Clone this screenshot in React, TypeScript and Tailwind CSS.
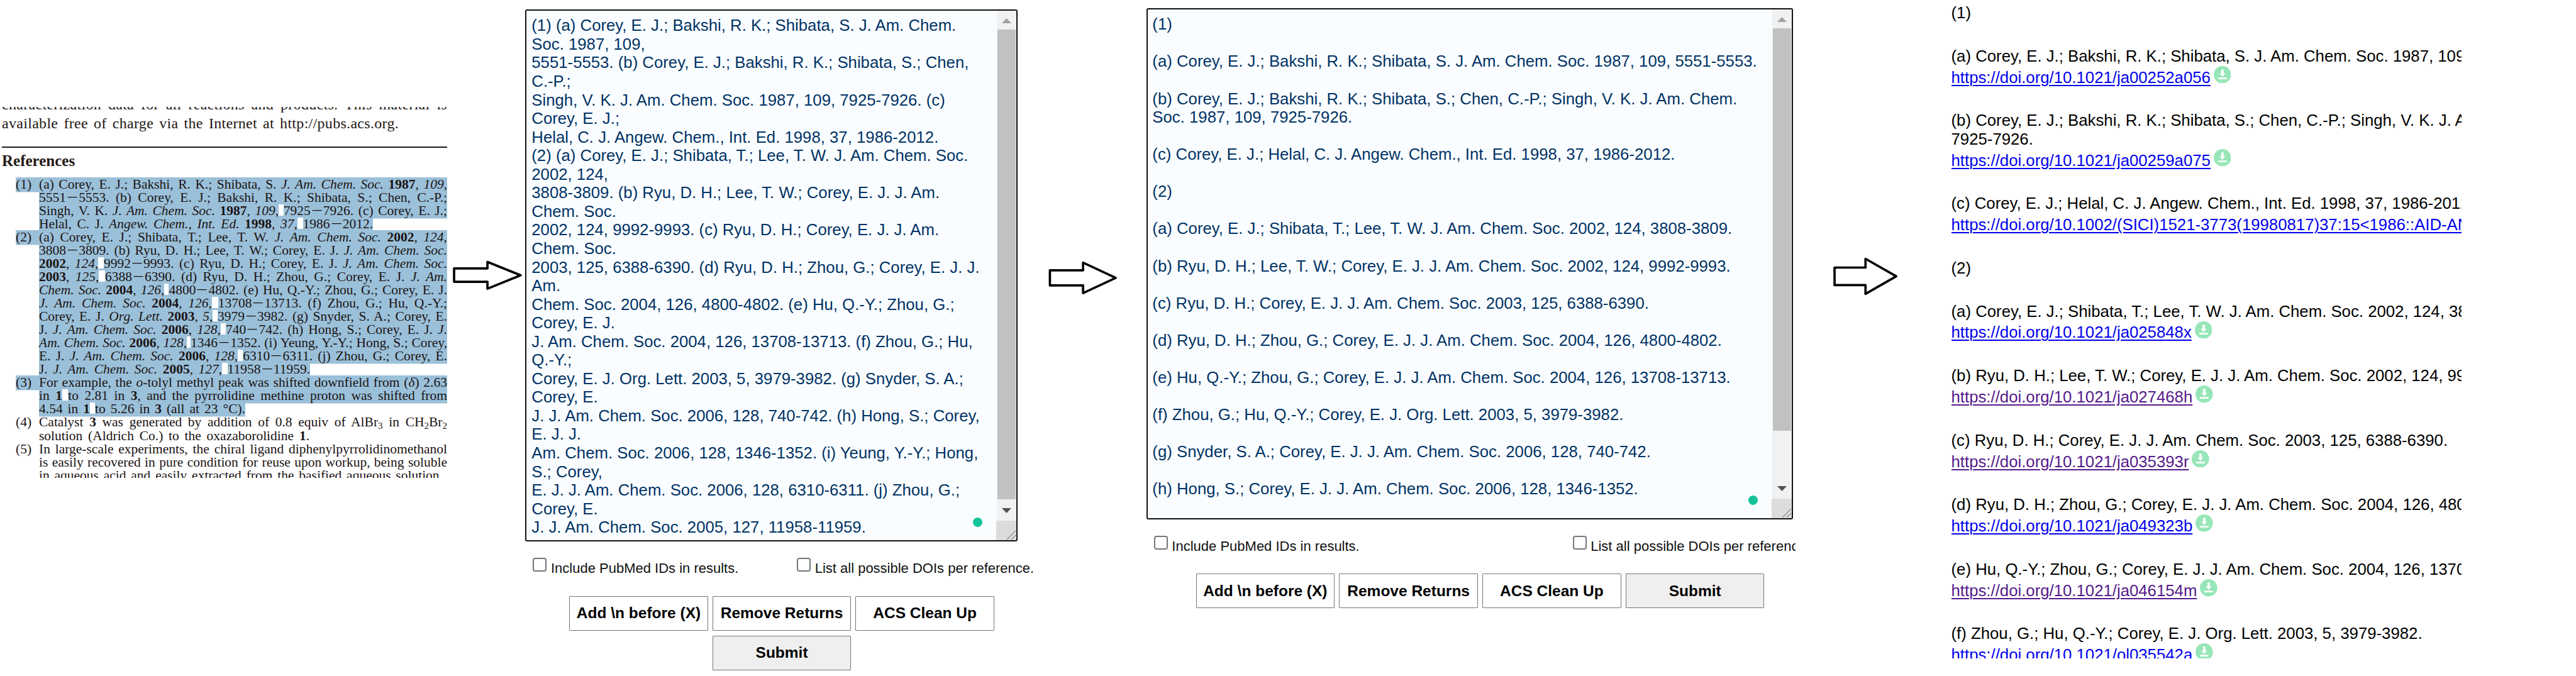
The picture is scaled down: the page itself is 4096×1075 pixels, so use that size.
import React from "react";

const paperLines: { num?: string; text: string; hl?: boolean; width?: string }[] = [
  { num: "(1)", hl: true, text: "(a) Corey, E. J.; Bakshi, R. K.; Shibata, S. _J. Am. Chem. Soc._ *1987*, _109_," },
  { hl: true, text: "5551−5553. (b) Corey, E. J.; Bakshi, R. K.; Shibata, S.; Chen, C.-P.;" },
  { hl: true, text: "Singh, V. K. _J. Am. Chem. Soc._ *1987*, _109_,~7925−7926. (c) Corey, E. J.;" },
  { hl: true, width: "w-[531px]", text: "Helal, C. J. _Angew. Chem., Int. Ed._ *1998*, _37_,~1986−2012." },
  { num: "(2)", hl: true, text: "(a) Corey, E. J.; Shibata, T.; Lee, T. W. _J. Am. Chem. Soc._ *2002*, _124_," },
  { hl: true, text: "3808−3809. (b) Ryu, D. H.; Lee, T. W.; Corey, E. J. _J. Am. Chem. Soc._" },
  { hl: true, text: "*2002*, _124_,~9992−9993. (c) Ryu, D. H.; Corey, E. J. _J. Am. Chem. Soc._" },
  { hl: true, text: "*2003*, _125_,~6388−6390. (d) Ryu, D. H.; Zhou, G.; Corey, E. J. _J. Am._" },
  { hl: true, text: "_Chem. Soc._ *2004*, _126_,~4800−4802. (e) Hu, Q.-Y.; Zhou, G.; Corey, E. J." },
  { hl: true, text: "_J. Am. Chem. Soc._ *2004*, _126_,~13708−13713. (f) Zhou, G.; Hu, Q.-Y.;" },
  { hl: true, text: "Corey, E. J. _Org. Lett._ *2003*, _5_,~3979−3982. (g) Snyder, S. A.; Corey, E." },
  { hl: true, text: "J. _J. Am. Chem. Soc._ *2006*, _128_,~740−742. (h) Hong, S.; Corey, E. J. _J._" },
  { hl: true, text: "_Am. Chem. Soc._ *2006*, _128_,~1346−1352. (i) Yeung, Y.-Y.; Hong, S.; Corey," },
  { hl: true, text: "E. J. _J. Am. Chem. Soc._ *2006*, _128_,~6310−6311. (j) Zhou, G.; Corey, E." },
  { hl: true, width: "w-[431px]", text: "J. _J. Am. Chem. Soc._ *2005*, _127_,~11958−11959." },
  { num: "(3)", hl: true, text: "For example, the _o_-tolyl methyl peak was shifted downfield from (_δ_) 2.63" },
  { hl: true, text: "in *1*~to 2.81 in *3*, and the pyrrolidine methine proton was shifted from" },
  { hl: true, width: "w-[328px]", text: "4.54 in *1*~to 5.26 in *3* (all at 23 °C)." },
  { num: "(4)", text: "Catalyst *3* was generated by addition of 0.8 equiv of AlBr<3> in CH<2>Br<2>" },
  { width: "w-[430px]", text: "solution (Aldrich Co.) to the oxazaborolidine *1*." },
  { num: "(5)", text: "In large-scale experiments, the chiral ligand diphenylpyrrolidinomethanol" },
  { text: "is easily recovered in pure condition for reuse upon workup, being soluble" },
  { width: "w-[642px]", text: "in aqueous acid and easily extracted from the basified aqueous solution." },
];

function rich(text: string) {
  return text.split(/(\*[^*]+\*|_[^_]+_|<[^>]+>|~|−)/).map((part, i) => {
    if (part === "~")
      return (
        <span key={i} className="bg-[linear-gradient(#fff,#fff)] bg-[length:100%_18px] bg-[position:0_2px] bg-no-repeat">
          {" "}
        </span>
      );
    if (part === "−") return <span key={i} className="inline-block scale-x-[1.5] px-[4px]">−</span>;
    if (part[0] === "*") return <b key={i}>{part.slice(1, -1)}</b>;
    if (part[0] === "_") return <i key={i}>{part.slice(1, -1)}</i>;
    if (part[0] === "<") return <span key={i} className="relative top-[4px] text-[15px]">{part.slice(1, -1)}</span>;
    return part;
  });
}

function Paper() {
  return (
    <section className="mt-[170px] h-[590.3px] w-[718.4px] shrink-0 overflow-hidden pl-[3px] font-['Liberation_Serif',serif] text-[#231815]">
      <div className="mt-[-19px] w-[708px] text-[24px] leading-[30.2px] tracking-[0.3px] whitespace-nowrap [text-align-last:justify]">
        <div>characterization data for all reactions and products. This material is</div>
        <div className="w-[631px]">available free of charge via the Internet at http://pubs.acs.org.</div>
      </div>
      <div className="mt-[21.5px] h-[2px] w-[708px] bg-[#231815]" />
      <h2 className="mt-[7px] text-[25px] leading-[28px] font-bold">References</h2>
      <div className="mt-[13px] w-[708px] pl-[22px] text-[21.5px] leading-[21.04px] whitespace-nowrap text-[#1a1414] [text-align-last:justify]">
        {paperLines.map((l, i) => (
          <div
            key={i}
            className={`h-[21.04px] ${l.num ? "" : "ml-[37px]"} ${l.width ?? ""} ${
              l.hl ? "bg-[#9bc0d9] shadow-[0_-1px_0_#9bc0d9,0_1.5px_0_#9bc0d9]" : ""
            }`}
          >
            {l.num && <span className="inline-block w-[37px] [text-align-last:left]">{l.num}</span>}
            {rich(l.text)}
          </div>
        ))}
      </div>
    </section>
  );
}

function Arrow({ viewBox, points, className }: { viewBox: string; points: string; className: string }) {
  return (
    <svg viewBox={viewBox} className={`shrink-0 ${className}`}>
      <polygon points={points} fill="#fff" stroke="#000" strokeWidth="5" strokeLinejoin="round" />
    </svg>
  );
}

function TextBox({ lines, size, thumb, dot, pad }: { lines: string[]; size: string; thumb: string; dot: string; pad: string }) {
  return (
    <div className={`relative flex overflow-hidden rounded-[3px] border-2 border-[#111] bg-[#fafdff] ${size}`}>
      <div className={`min-w-0 flex-1 pt-[9px] ${pad} text-[25.75px] leading-[29.55px] whitespace-pre text-[#003366]`}>
        {lines.map((l, i) => (
          <div key={i} className="h-[29.55px]">
            {l}
          </div>
        ))}
      </div>
      <div className="flex w-[31px] shrink-0 flex-col bg-[#f1f1f1]">
        <div className="flex h-[30px] items-center justify-center pt-[1px]">
          <svg viewBox="0 0 15 8" className="h-[8px] w-[15px]"><path d="M0 8L7.5 0L15 8Z" fill="#a3a3a3" /></svg>
        </div>
        <div className={`mx-[1px] bg-[#c1c1c1] ${thumb}`} />
        <div className="flex flex-1 items-end justify-center pb-[12px]">
          <svg viewBox="0 0 15 8" className="h-[8px] w-[15px]"><path d="M0 0L7.5 8L15 0Z" fill="#505050" /></svg>
        </div>
        <div className="ml-[-1px] flex h-[31px] w-[32px] items-end justify-end bg-[#dcdcdc]">
          <svg viewBox="0 0 16 16" className="size-[16px]">
            <path d="M1 15L15 1M8 15L15 8" stroke="#555" strokeWidth="1" />
          </svg>
        </div>
      </div>
      <span className={`absolute size-[15px] rounded-full bg-[#15c39a] ${dot}`} />
    </div>
  );
}

function Check({ label, className }: { label: string; className: string }) {
  return (
    <label className={`flex shrink-0 items-start gap-[6.5px] text-[22px] leading-[25px] whitespace-nowrap text-[#111] ${className}`}>
      <input type="checkbox" className="size-[22px] shrink-0 appearance-none rounded-[4px] border-2 border-[#767676] bg-white" />
      <span className="mt-[4px]">{label}</span>
    </label>
  );
}

function Btn({ label, submit }: { label: string; submit?: boolean }) {
  return (
    <button
      className={`h-[55px] w-[220.4px] shrink-0 rounded-[1px] border border-[#767676] text-[24.5px] leading-none font-bold whitespace-nowrap text-black ${
        submit ? "bg-[#efefef]" : "bg-white"
      }`}
    >
      {label}
    </button>
  );
}

const raw = [
  "(1) (a) Corey, E. J.; Bakshi, R. K.; Shibata, S. J. Am. Chem.",
  "Soc. 1987, 109,",
  "5551-5553. (b) Corey, E. J.; Bakshi, R. K.; Shibata, S.; Chen,",
  "C.-P.;",
  "Singh, V. K. J. Am. Chem. Soc. 1987, 109, 7925-7926. (c)",
  "Corey, E. J.;",
  "Helal, C. J. Angew. Chem., Int. Ed. 1998, 37, 1986-2012.",
  "(2) (a) Corey, E. J.; Shibata, T.; Lee, T. W. J. Am. Chem. Soc.",
  "2002, 124,",
  "3808-3809. (b) Ryu, D. H.; Lee, T. W.; Corey, E. J. J. Am.",
  "Chem. Soc.",
  "2002, 124, 9992-9993. (c) Ryu, D. H.; Corey, E. J. J. Am.",
  "Chem. Soc.",
  "2003, 125, 6388-6390. (d) Ryu, D. H.; Zhou, G.; Corey, E. J. J.",
  "Am.",
  "Chem. Soc. 2004, 126, 4800-4802. (e) Hu, Q.-Y.; Zhou, G.;",
  "Corey, E. J.",
  "J. Am. Chem. Soc. 2004, 126, 13708-13713. (f) Zhou, G.; Hu,",
  "Q.-Y.;",
  "Corey, E. J. Org. Lett. 2003, 5, 3979-3982. (g) Snyder, S. A.;",
  "Corey, E.",
  "J. J. Am. Chem. Soc. 2006, 128, 740-742. (h) Hong, S.; Corey,",
  "E. J. J.",
  "Am. Chem. Soc. 2006, 128, 1346-1352. (i) Yeung, Y.-Y.; Hong,",
  "S.; Corey,",
  "E. J. J. Am. Chem. Soc. 2006, 128, 6310-6311. (j) Zhou, G.;",
  "Corey, E.",
  "J. J. Am. Chem. Soc. 2005, 127, 11958-11959.",
];

const cleaned = [
  "(1)",
  "",
  "(a) Corey, E. J.; Bakshi, R. K.; Shibata, S. J. Am. Chem. Soc. 1987, 109, 5551-5553.",
  "",
  "(b) Corey, E. J.; Bakshi, R. K.; Shibata, S.; Chen, C.-P.; Singh, V. K. J. Am. Chem.",
  "Soc. 1987, 109, 7925-7926.",
  "",
  "(c) Corey, E. J.; Helal, C. J. Angew. Chem., Int. Ed. 1998, 37, 1986-2012.",
  "",
  "(2)",
  "",
  "(a) Corey, E. J.; Shibata, T.; Lee, T. W. J. Am. Chem. Soc. 2002, 124, 3808-3809.",
  "",
  "(b) Ryu, D. H.; Lee, T. W.; Corey, E. J. J. Am. Chem. Soc. 2002, 124, 9992-9993.",
  "",
  "(c) Ryu, D. H.; Corey, E. J. J. Am. Chem. Soc. 2003, 125, 6388-6390.",
  "",
  "(d) Ryu, D. H.; Zhou, G.; Corey, E. J. J. Am. Chem. Soc. 2004, 126, 4800-4802.",
  "",
  "(e) Hu, Q.-Y.; Zhou, G.; Corey, E. J. J. Am. Chem. Soc. 2004, 126, 13708-13713.",
  "",
  "(f) Zhou, G.; Hu, Q.-Y.; Corey, E. J. Org. Lett. 2003, 5, 3979-3982.",
  "",
  "(g) Snyder, S. A.; Corey, E. J. J. Am. Chem. Soc. 2006, 128, 740-742.",
  "",
  "(h) Hong, S.; Corey, E. J. J. Am. Chem. Soc. 2006, 128, 1346-1352.",
];

const results: { lines: string[]; doi?: string; visited?: boolean }[] = [
  { lines: ["(1)"] },
  { lines: ["(a) Corey, E. J.; Bakshi, R. K.; Shibata, S. J. Am. Chem. Soc. 1987, 109, 5551-5553."], doi: "10.1021/ja00252a056" },
  {
    lines: ["(b) Corey, E. J.; Bakshi, R. K.; Shibata, S.; Chen, C.-P.; Singh, V. K. J. Am. Chem. Soc. 1987, 109,", "7925-7926."],
    doi: "10.1021/ja00259a075",
  },
  {
    lines: ["(c) Corey, E. J.; Helal, C. J. Angew. Chem., Int. Ed. 1998, 37, 1986-2012."],
    doi: "10.1002/(SICI)1521-3773(19980817)37:15<1986::AID-ANIE1986>3.0.CO;2-Z",
  },
  { lines: ["(2)"] },
  { lines: ["(a) Corey, E. J.; Shibata, T.; Lee, T. W. J. Am. Chem. Soc. 2002, 124, 3808-3809."], doi: "10.1021/ja025848x" },
  { lines: ["(b) Ryu, D. H.; Lee, T. W.; Corey, E. J. J. Am. Chem. Soc. 2002, 124, 9992-9993."], doi: "10.1021/ja027468h", visited: true },
  { lines: ["(c) Ryu, D. H.; Corey, E. J. J. Am. Chem. Soc. 2003, 125, 6388-6390."], doi: "10.1021/ja035393r", visited: true },
  { lines: ["(d) Ryu, D. H.; Zhou, G.; Corey, E. J. J. Am. Chem. Soc. 2004, 126, 4800-4802."], doi: "10.1021/ja049323b" },
  { lines: ["(e) Hu, Q.-Y.; Zhou, G.; Corey, E. J. J. Am. Chem. Soc. 2004, 126, 13708-13713."], doi: "10.1021/ja046154m", visited: true },
  { lines: ["(f) Zhou, G.; Hu, Q.-Y.; Corey, E. J. Org. Lett. 2003, 5, 3979-3982."], doi: "10.1021/ol035542a" },
];

function Results() {
  return (
    <section className="ml-[83.6px] flex h-[1047.2px] w-[811.2px] shrink-0 flex-col gap-[39.25px] overflow-hidden pt-[6px] text-[25.75px] leading-[29.5px] whitespace-nowrap text-black">
      {results.map((r, i) => (
        <div key={i} className="shrink-0">
          {r.lines.map((l) => (
            <div key={l}>{l}</div>
          ))}
          {r.doi && (
            <div className="mt-[4.3px] flex h-[29.5px] items-start gap-[5px]">
              <a
                href="#"
                className={`underline decoration-2 underline-offset-[3px] ${r.visited ? "text-[#551a8b]" : "text-[#0000ee]"}`}
              >
                {"https://doi.org/" + r.doi}
              </a>
              <svg viewBox="0 0 116 116" className="mt-[-3.7px] size-[27.6px] shrink-0">
                <circle cx="58" cy="58" r="58" fill="#97e6b8" />
                <path d="M51 22H66V48H77L58.5 71L39 48H51Z" fill="#fff" />
                <rect x="29" y="77" width="58" height="11" fill="#fff" />
              </svg>
            </div>
          )}
        </div>
      ))}
    </section>
  );
}

export default function App() {
  return (
    <main className="flex h-[1075px] w-[4096px] items-start overflow-hidden bg-white font-['Liberation_Sans',Arial,sans-serif]">
      <Paper />
      <Arrow
        viewBox="978 560 156 72"
        points="983.5,581.5 1055.7,581.5 1055.7,567.5 1127.5,596.5 1055.7,625.5 1055.7,610.5 983.5,610.5"
        className="mt-[411.4px] h-[52.9px] w-[114.6px]"
      />
      <section className="ml-[2px] w-[812px] shrink-0 pt-[15.4px]">
        <TextBox lines={raw} size="h-[846px] w-[783px]" thumb="h-[747px]" dot="left-[710.3px] top-[805.6px]" pad="pl-[8.3px]" />
        <div className="mt-[26px] flex pl-[12.5px]">
          <Check label="Include PubMed IDs in results." className="w-[419.7px]" />
          <Check label="List all possible DOIs per reference." className="" />
        </div>
        <div className="mt-[31.2px] ml-[70.2px] flex w-[675.8px] flex-wrap justify-center gap-x-[7.2px] gap-y-[8px]">
          <Btn label="Add \n before (X)" />
          <Btn label="Remove Returns" />
          <Btn label="ACS Clean Up" />
          <Btn label="Submit" submit />
        </div>
      </section>
      <Arrow
        viewBox="2266 560 156 84"
        points="2272,585.6 2343.8,585.6 2343.8,569 2414.5,602 2343.8,635 2343.8,618.4 2272,618.4"
        className="mt-[411.4px] ml-[17.6px] h-[61.7px] w-[114.6px]"
      />
      <section className="ml-[43.7px] w-[1032.1px] shrink-0 overflow-hidden pt-[13.4px]">
        <TextBox lines={cleaned} size="h-[813px] w-[1028px]" thumb="h-[640px]" dot="left-[955.5px] top-[772.4px]" pad="pl-[7.5px]" />
        <div className="mt-[25.7px] flex pl-[12px]">
          <Check label="Include PubMed IDs in results." className="w-[665.9px]" />
          <Check label="List all possible DOIs per reference." className="" />
        </div>
        <div className="mt-[31.2px] flex gap-[7.4px] pl-[78.8px]">
          <Btn label="Add \n before (X)" />
          <Btn label="Remove Returns" />
          <Btn label="ACS Clean Up" />
          <Btn label="Submit" submit />
        </div>
      </section>
      <Arrow
        viewBox="3966 552 144 92"
        points="3971.5,578.5 4038.5,578.5 4038.5,559.5 4105,597.3 4038.5,635.5 4038.5,616.5 3971.5,616.5"
        className="mt-[405.5px] ml-[58.2px] h-[67.6px] w-[105.8px]"
      />
      <Results />
    </main>
  );
}
